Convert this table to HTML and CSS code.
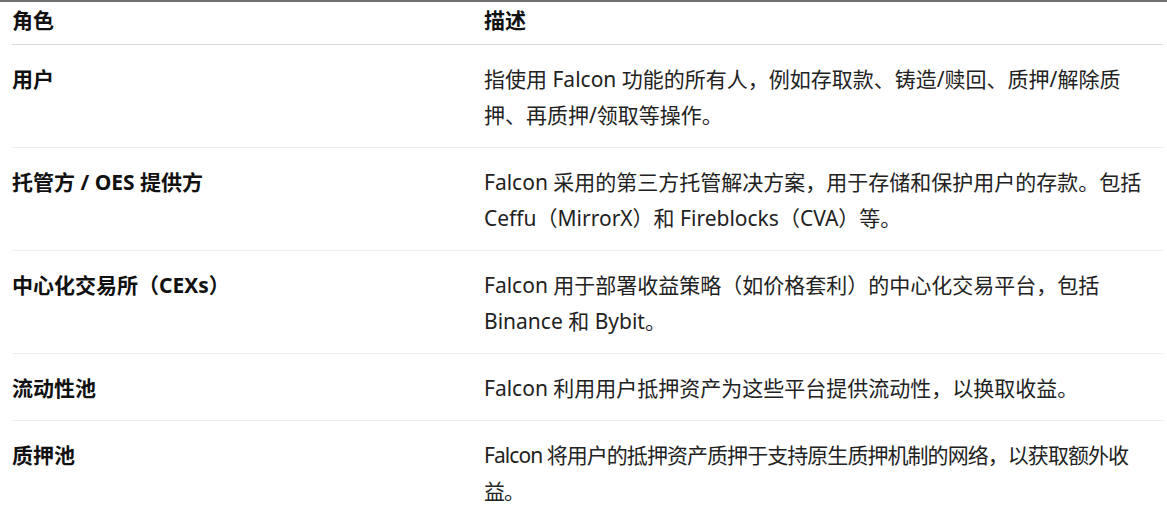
FILE: index.html
```html
<!DOCTYPE html>
<html lang="zh-CN">
<head>
<meta charset="utf-8">
<title>角色</title>
<link rel="stylesheet" href="styles.css">
</head>
<body>
<div class="page">
  <table class="roles">
    <colgroup>
      <col class="col-role">
      <col class="col-desc">
    </colgroup>
    <thead>
      <tr><th>角色</th><th>描述</th></tr>
    </thead>
    <tbody>
      <tr><td>用户</td><td>指使用 Falcon 功能的所有人，例如存取款、铸造/赎回、质押/解除质押、再质押/领取等操作。</td></tr>
      <tr><td>托管方 / OES 提供方</td><td>Falcon 采用的第三方托管解决方案，用于存储和保护用户的存款。包括 Ceffu（MirrorX）和 Fireblocks（CVA）等。</td></tr>
      <tr><td>中心化交易所（CEXs）</td><td>Falcon 用于部署收益策略（如价格套利）的中心化交易平台，包括 Binance 和 Bybit。</td></tr>
      <tr><td>流动性池</td><td>Falcon 利用用户抵押资产为这些平台提供流动性，以换取收益。</td></tr>
      <tr><td>质押池</td><td class="tight">Falcon 将用户的抵押资产质押于支持原生质押机制的网络，以获取额外收益。</td></tr>
    </tbody>
  </table>
</div>
</body>
</html>
```

FILE: styles.css
```css
html, body {
  margin: 0;
  padding: 0;
  background: #ffffff;
}

.page {
  border-top: 2px solid #707070;
  padding-left: 12px;
  font-family: "Noto Sans", "Noto Sans CJK SC", sans-serif;
  font-size: 21px;
  color: #222222;
}

.roles {
  width: 1151px;
  border-collapse: collapse;
  table-layout: fixed;
}

.col-role { width: 460px; }

.roles th,
.roles td {
  text-align: left;
  vertical-align: top;
  line-height: 36px;
  padding: 16px 13px 14px 12px;
}

.roles th:first-child,
.roles td:first-child {
  padding-left: 0;
}

.roles th {
  font-weight: 700;
  color: #111111;
  padding-top: 0;
  padding-bottom: 6px;
  border-bottom: 1px solid #d8d8d8;
}

.roles td {
  border-bottom: 1px solid #eeeeee;
}

.roles td:first-child {
  font-weight: 700;
  color: #111111;
}

.roles td.tight {
  letter-spacing: -0.95px;
}
```
